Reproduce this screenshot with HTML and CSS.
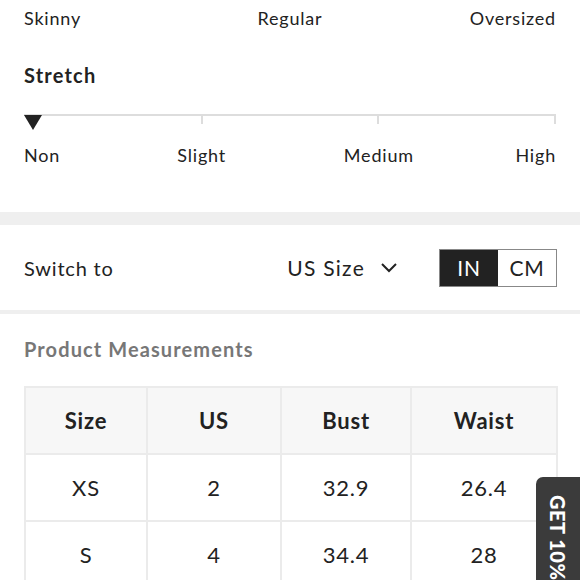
FILE: index.html
```html
<!DOCTYPE html>
<html>
<head>
<meta charset="utf-8">
<link rel="stylesheet" href="styles.css">
</head>
<body>
<div class="section">
  <div class="fit-labels">
    <span class="l">Skinny</span><span class="m">Regular</span><span class="r">Oversized</span>
  </div>
  <h3 class="title">Stretch</h3>
  <div class="slider">
    <div class="track"></div>
    <div class="ticks">
      <span class="tick t0"></span><span class="tick"></span><span class="tick"></span><span class="tick"></span>
    </div>
    <span class="pointer"></span>
  </div>
  <div class="stretch-labels">
    <span class="c1">Non</span><span class="c2">Slight</span><span class="c3">Medium</span><span class="c4">High</span>
  </div>
</div>
<div class="band thick"></div>
<div class="switch-row">
  <span class="switch-label">Switch to</span>
  <span class="select">US Size
    <svg class="chev" width="18" height="11" viewBox="0 0 18 11"><path d="M2 2 L9 9 L16 2" fill="none" stroke="#222" stroke-width="2"/></svg>
  </span>
  <div class="toggle"><span class="opt on">IN</span><span class="opt">CM</span></div>
</div>
<div class="band thin"></div>
<div class="section">
  <h3 class="pm-title">Product Measurements</h3>
  <table class="measure">
    <colgroup><col class="w1"><col class="w2"><col class="w3"><col class="w4"></colgroup>
    <tr><th>Size</th><th>US</th><th>Bust</th><th>Waist</th></tr>
    <tr><td>XS</td><td>2</td><td>32.9</td><td>26.4</td></tr>
    <tr><td>S</td><td>4</td><td>34.4</td><td>28</td></tr>
  </table>
</div>
<div class="side-tab">GET 10%</div>
</body>
</html>
```
FILE: styles.css
```css
html, body {
  margin: 0;
  padding: 0;
  background: #fff;
  font-family: Lato, "Open Sans", sans-serif;
  color: #222;
  overflow: hidden;
  letter-spacing: 0.05em;
}
.section {
  padding: 0 24px;
}
.fit-labels {
  display: grid;
  grid-template-columns: 1fr auto 1fr;
  font-size: 18px;
  line-height: 22px;
  padding-top: 7px;
}
.fit-labels .m { text-align: center; }
.fit-labels .r { text-align: right; }
.title {
  margin: 34px 0 0;
  font-size: 20px;
  line-height: 24px;
  font-weight: 700;
  letter-spacing: 0.06em;
}
.slider {
  position: relative;
  margin-top: 27px;
  height: 29px;
}
.track {
  height: 2px;
  background: #ddd;
}
.ticks {
  display: flex;
  justify-content: space-between;
}
.tick {
  width: 2px;
  height: 8px;
  background: #ddd;
}
.tick.t0 {
  visibility: hidden;
}
.pointer {
  position: absolute;
  left: 0;
  top: 1px;
  width: 0;
  height: 0;
  border-left: 9px solid transparent;
  border-right: 9px solid transparent;
  border-top: 15px solid #222;
}
.stretch-labels {
  position: relative;
  height: 22px;
  font-size: 18px;
  line-height: 22px;
  padding-bottom: 47px;
}
.stretch-labels span {
  position: absolute;
  top: 1px;
}
.stretch-labels .c1 { left: 0; }
.stretch-labels .c2 { left: 33.4%; transform: translateX(-50%); }
.stretch-labels .c3 { left: 66.7%; transform: translateX(-50%); }
.stretch-labels .c4 { right: 0; }
.band {
  background: #efefef;
}
.band.thick { height: 13px; }
.band.thin { height: 4px; }
.switch-row {
  display: flex;
  align-items: center;
  height: 85px;
  padding: 0 23px 0 24px;
  font-size: 20px;
}
.switch-label {
  flex: 1;
}
.select {
  display: flex;
  align-items: center;
  gap: 15px;
  margin-right: 41px;
  font-size: 21px;
  letter-spacing: 0.06em;
}
.chev {
  display: block;
}
.toggle {
  display: flex;
  border: 1px solid #888;
  height: 36px;
}
.opt {
  width: 58px;
  display: flex;
  align-items: center;
  justify-content: center;
  font-size: 21px;
}
.opt.on {
  background: #222;
  color: #fff;
}
.pm-title {
  margin: 23px 0 25px;
  font-size: 20px;
  line-height: 24px;
  font-weight: 700;
  color: #777;
  letter-spacing: 0.055em;
}
.measure {
  width: 532px;
  border-collapse: collapse;
  table-layout: fixed;
}
.measure .w1 { width: 122px; }
.measure .w2 { width: 134px; }
.measure .w3 { width: 130px; }
.measure .w4 { width: 146px; }
.measure th, .measure td {
  border: 2px solid #ebebeb;
  height: 65px;
  text-align: center;
  font-size: 22px;
  padding: 0;
}
.measure th {
  background: #f7f7f7;
  font-weight: 700;
}
.side-tab {
  position: fixed;
  right: 0;
  top: 477px;
  width: 44px;
  height: 160px;
  background: #3b3b3b;
  border-top-left-radius: 7px;
  color: #fff;
  font-weight: 900;
  font-size: 20px;
  writing-mode: vertical-rl;
  display: flex;
  align-items: center;
  padding-top: 18px;
  box-sizing: border-box;
  letter-spacing: 0.5px;
}
```
